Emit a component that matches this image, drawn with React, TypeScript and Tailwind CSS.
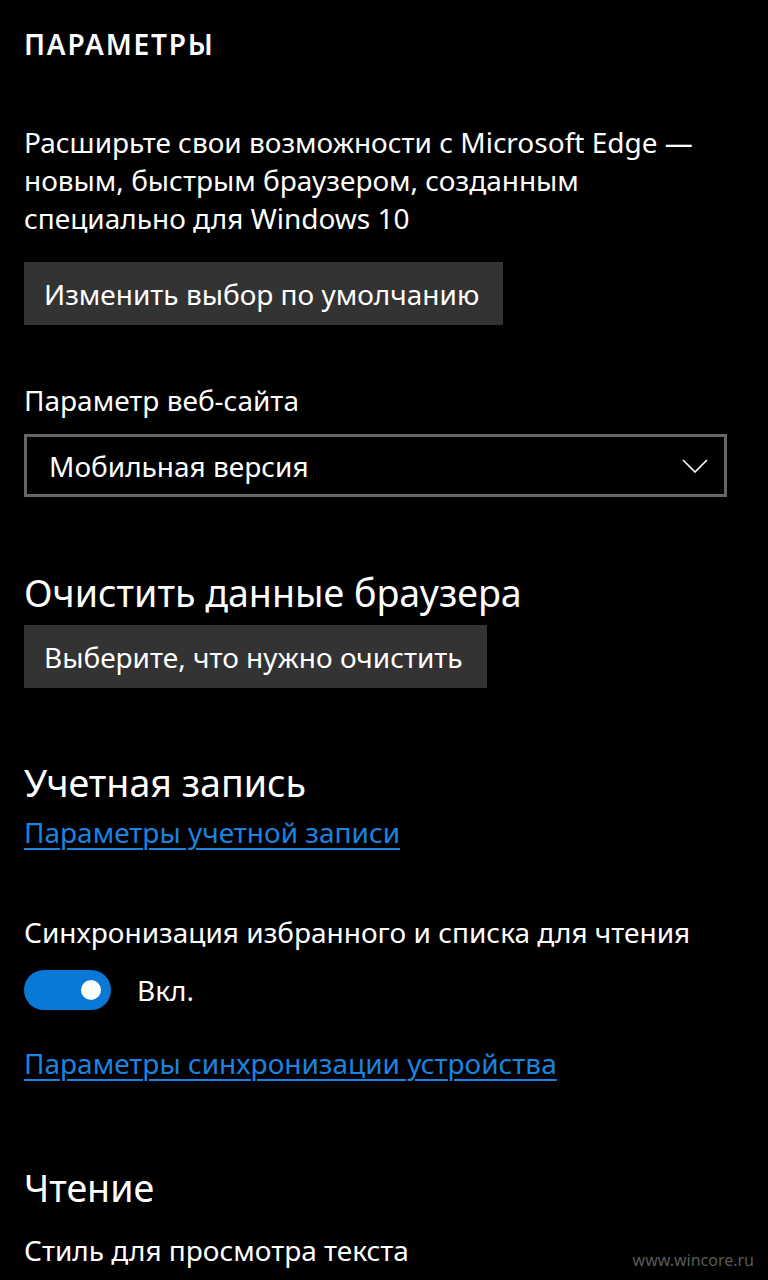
export default function App() {
  return (
    <div
      className="relative min-h-[1280px] w-[768px] overflow-hidden bg-black px-6 text-white"
      style={{ fontFamily: '"Noto Sans", "Open Sans", sans-serif' }}
    >
      <h1 className="pt-[26px] text-[28px] font-semibold leading-[36px] tracking-[1.8px]">ПАРАМЕТРЫ</h1>

      <p className="mt-[61px] text-[28px] leading-[38px]">
        Расширьте свои возможности с Microsoft Edge —<br />
        новым, быстрым браузером, созданным<br />
        специально для Windows 10
      </p>

      <button className="mt-[25px] flex h-[63px] items-center bg-[#333333] pl-[20px] pr-[24px] text-[28px]">
        Изменить выбор по умолчанию
      </button>

      <div className="mt-[57px] text-[28px] leading-[36px]">Параметр веб-сайта</div>
      <div className="mt-[16px] flex h-[63px] w-[703px] items-center justify-between border-[3px] border-[#666666] pl-[22px] pr-[16px] text-[28px]">
        <span>Мобильная версия</span>
        <svg width="26" height="14" viewBox="0 0 26 14" fill="none" stroke="white" strokeWidth="1.6">
          <path d="M1 1l12 12L25 1" />
        </svg>
      </div>

      <h2 className="mt-[74px] text-[37.6px] leading-[44px]">Очистить данные браузера</h2>
      <button className="mt-[10px] flex h-[63px] items-center bg-[#333333] pl-[20px] pr-[24px] text-[28px]">
        Выберите, что нужно очистить
      </button>

      <h2 className="mt-[73px] text-[37.6px] leading-[44px]">Учетная запись</h2>
      <a className="mt-[9px] block text-[28px] leading-[36px] text-[#1b83e0] underline decoration-[2px] underline-offset-[5px]">
        Параметры учетной записи
      </a>

      <div className="mt-[64px] text-[28px] leading-[36px]">Синхронизация избранного и списка для чтения</div>
      <div className="mt-[20px] flex items-center gap-[26px]">
        <div className="flex h-[40px] w-[87px] items-center justify-end rounded-full bg-[#0a78d7] pr-[10px]">
          <div className="h-[20px] w-[20px] rounded-full bg-white" />
        </div>
        <span className="text-[28px] leading-[36px]">Вкл.</span>
      </div>

      <a className="mt-[35px] block text-[28px] leading-[36px] text-[#1b83e0] underline decoration-[2px] underline-offset-[5px]">
        Параметры синхронизации устройства
      </a>

      <h2 className="mt-[85px] text-[37.6px] leading-[44px]">Чтение</h2>
      <div className="mt-[22px] text-[28px] leading-[36px]">Стиль для просмотра текста</div>

      <div className="absolute bottom-[8px] right-[14px] text-[16px] text-[#5a5a5a]">www.wincore.ru</div>
    </div>
  )
}
